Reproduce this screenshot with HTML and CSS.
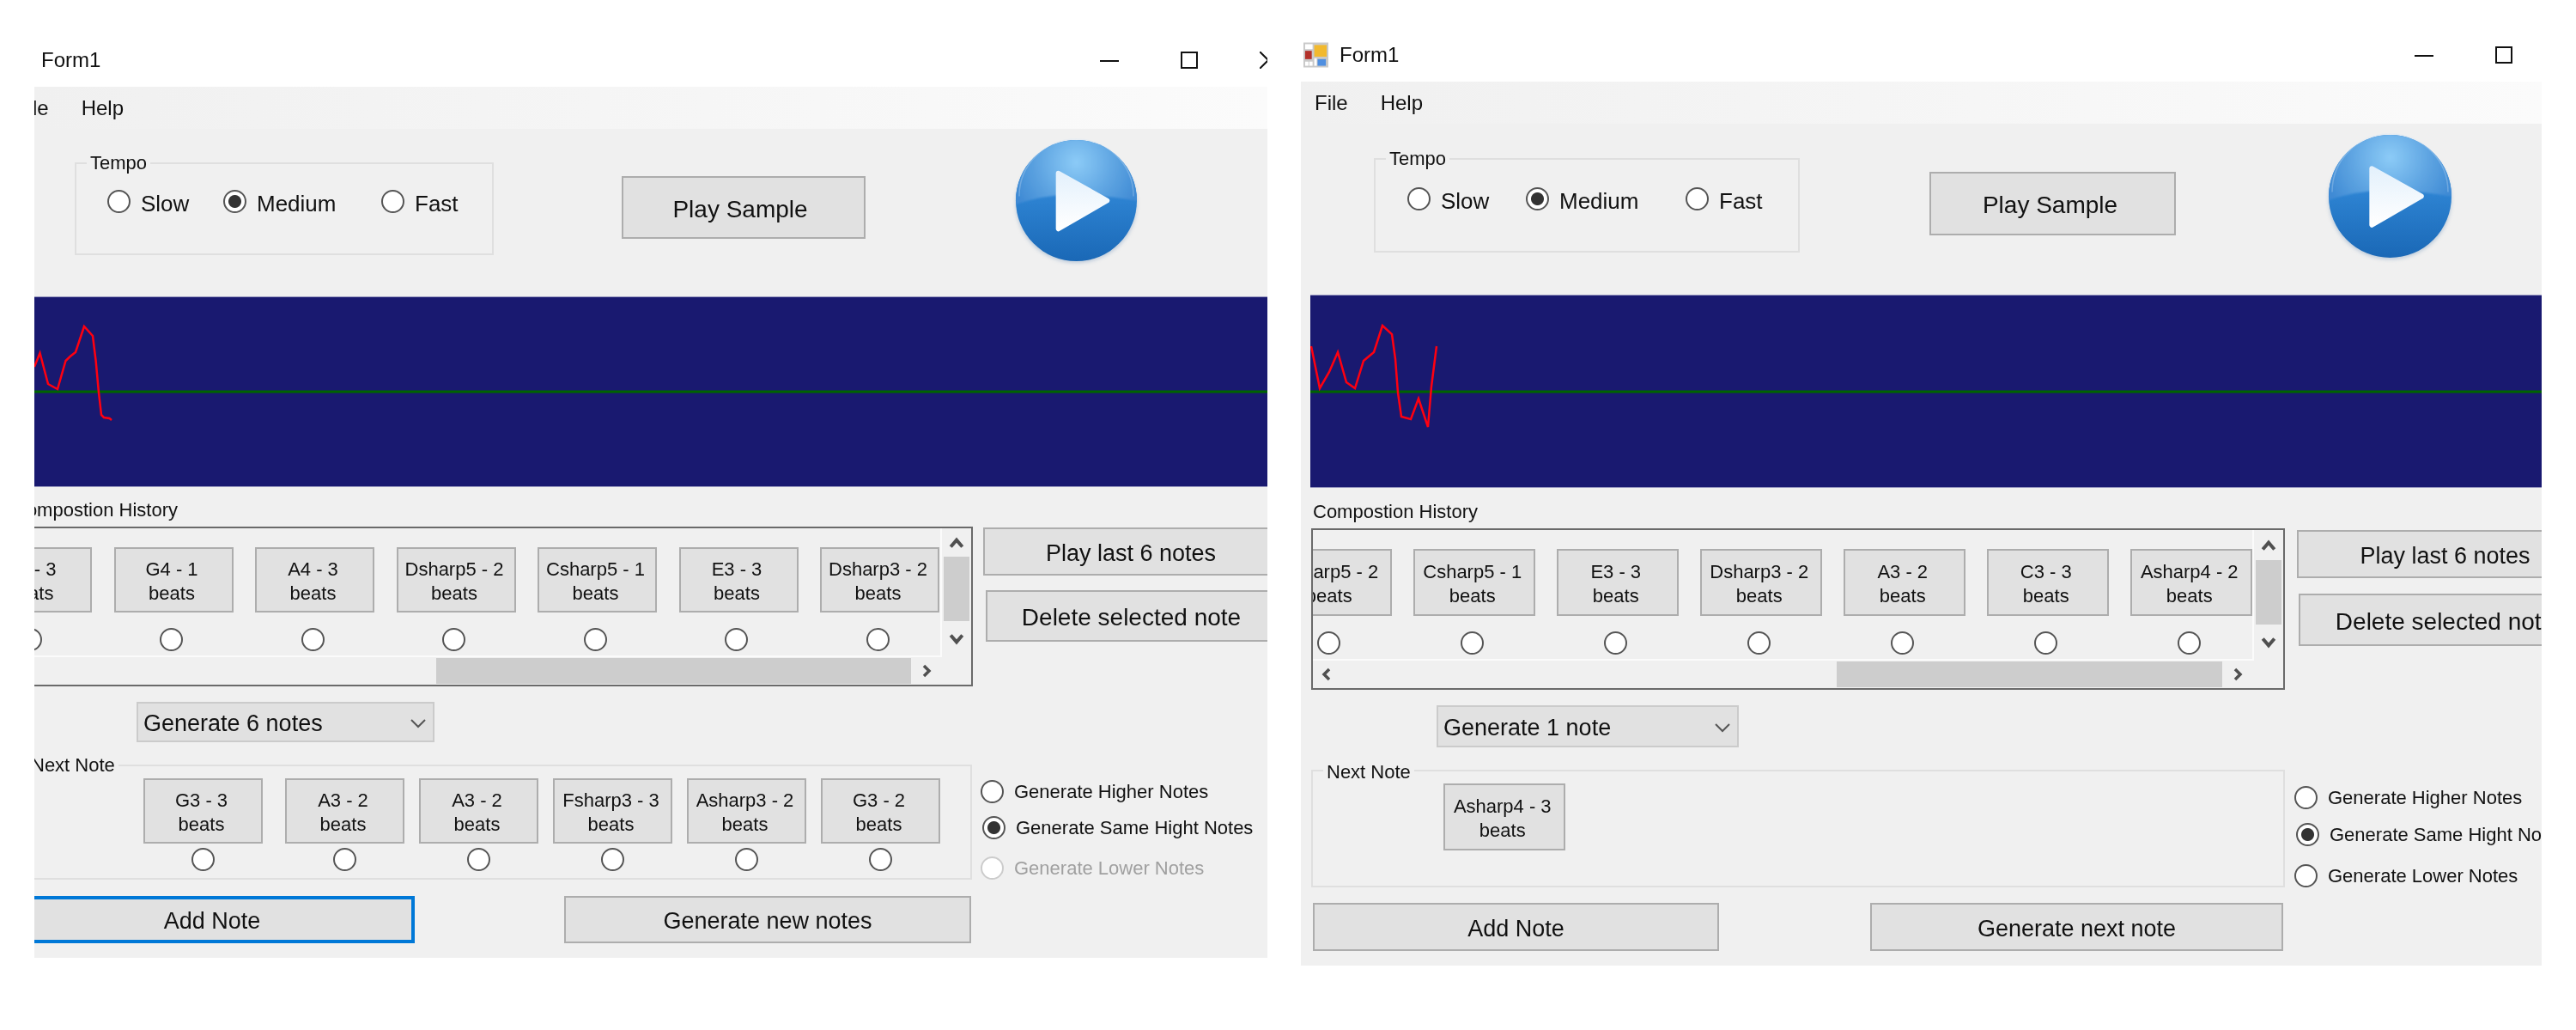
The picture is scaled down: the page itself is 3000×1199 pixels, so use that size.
FILE: index.html
```html
<!DOCTYPE html>
<html>
    <head>
        <title>Form1</title>
        <link rel="stylesheet" href="styles.css">
    </head>
    <body>
        <div class="desktop">

            <!-- first window, its left edge is cut off -->
            <div class="window win-a">
                <div class="titlebar">
                    <span class="title-text">Form1</span>
                    <div class="controls">
                        <svg class="ctl-min" viewBox="0 0 22 20"><path d="M0 11H22"/></svg>
                        <svg class="ctl-max" viewBox="0 0 20 20"><rect x="1" y="1" width="18" height="18"/></svg>
                        <svg class="ctl-close" viewBox="0 0 20 20"><path d="M0 0L20 20M20 0L0 20"/></svg>
                    </div>
                </div>
                <div class="form">
                    <div class="menubar">
                        <span class="menu-file">File</span>
                        <span class="menu-help">Help</span>
                    </div>
                    <div class="top-row">
                        <div class="group tempo">
                            <div class="group-title">Tempo</div>
                            <div class="tempo-options">
                                <label class="option"><input type="radio" name="tempoA">Slow</label>
                                <label class="option"><input type="radio" name="tempoA" checked>Medium</label>
                                <label class="option"><input type="radio" name="tempoA">Fast</label>
                            </div>
                        </div>
                        <button class="btn btn-sample">Play Sample</button>
                        <svg class="play-icon" viewBox="0 0 144 144">
                            <defs>
                                <filter id="ballShadow"><feGaussianBlur stdDeviation="2"/></filter>
                                <filter id="glossEdge"><feGaussianBlur stdDeviation="1"/></filter>
                                <radialGradient id="ballTop" gradientUnits="userSpaceOnUse" cx="72" cy="26" r="80">
                                    <stop offset="0" stop-color="#8ccbf7"/>
                                    <stop offset="0.55" stop-color="#5fa5e2"/>
                                    <stop offset="1" stop-color="#3f8ad4"/>
                                </radialGradient>
                                <linearGradient id="ballLow" x1="0" y1="0" x2="0" y2="1">
                                    <stop offset="0.45" stop-color="#2e84d3"/>
                                    <stop offset="1" stop-color="#1a68b6"/>
                                </linearGradient>
                                <linearGradient id="arrowFill" x1="0" y1="0" x2="0" y2="1">
                                    <stop offset="0" stop-color="#e4f1fc"/>
                                    <stop offset="1" stop-color="#ffffff"/>
                                </linearGradient>
                                <clipPath id="ballClip"><circle cx="72" cy="71" r="71"/></clipPath>
                            </defs>
                            <g id="playShape">
                                <ellipse cx="72" cy="75" rx="71" ry="69" fill="#8aa6c4" opacity="0.5" filter="url(#ballShadow)"/>
                                <circle cx="72" cy="71" r="71" fill="url(#ballLow)"/>
                                <g clip-path="url(#ballClip)">
                                    <path d="M-4 77Q36 63 72 64T148 72V-4H-4Z" fill="url(#ballTop)" filter="url(#glossEdge)"/>
                                </g>
                                <path d="M5 66A67 67 0 0 1 139 66" fill="none" stroke="#cfe6fa" stroke-opacity="0.3" stroke-width="1.5"/>
                                <path d="M51 39L108 71L51 104Z" fill="url(#arrowFill)" stroke="url(#arrowFill)" stroke-width="6" stroke-linejoin="round"/>
                            </g>
                        </svg>
                    </div>
                    <svg class="band" viewBox="0 1 1436 220">
                        <path class="axis" d="M0 111H1436"/>
                        <polyline class="wave" points="0,82 6.5,66 16,102 27,108 36.5,75 41.6,70 48,65 58,35 68,46 71.6,75 75,112 78,138 81,141 87.5,142 90,144"/>
                    </svg>
                    <div class="history-title">Compostion History</div>
                    <div class="history-row">
                        <div class="scrollbox">
                            <div class="viewport">
                                <div class="note"><button class="btn note-btn">C3 - 3<br>beats</button><input type="radio" name="histA"></div>
                                <div class="note"><button class="btn note-btn">G4 - 1<br>beats</button><input type="radio" name="histA"></div>
                                <div class="note"><button class="btn note-btn">A4 - 3<br>beats</button><input type="radio" name="histA"></div>
                                <div class="note"><button class="btn note-btn">Dsharp5 - 2<br>beats</button><input type="radio" name="histA"></div>
                                <div class="note"><button class="btn note-btn">Csharp5 - 1<br>beats</button><input type="radio" name="histA"></div>
                                <div class="note"><button class="btn note-btn">E3 - 3<br>beats</button><input type="radio" name="histA"></div>
                                <div class="note"><button class="btn note-btn">Dsharp3 - 2<br>beats</button><input type="radio" name="histA"></div>
                            </div>
                            <div class="vbar">
                                <svg class="arrow" viewBox="0 0 16 12"><path d="M2 10L8 3L14 10"/></svg>
                                <div class="vthumb"></div>
                                <svg class="arrow" viewBox="0 0 16 12"><path d="M2 2L8 9L14 2"/></svg>
                            </div>
                            <div class="hbar">
                                <div class="hthumb"></div>
                                <svg class="arrow-side" viewBox="0 0 12 16"><path d="M3 2L9 8L3 14"/></svg>
                            </div>
                        </div>
                        <div class="side-buttons">
                            <button class="btn btn-play-last">Play last 6 notes</button>
                            <button class="btn btn-delete">Delete selected note</button>
                        </div>
                    </div>
                    <div class="combo">
                        <span>Generate 6 notes</span>
                        <svg class="combo-arrow" viewBox="0 0 20 12"><path d="M2 2L10 10L18 2"/></svg>
                    </div>
                    <div class="next-row">
                        <div class="group next-group">
                            <div class="group-title">Next Note</div>
                            <div class="next-notes">
                                <div class="note"><button class="btn note-btn">G3 - 3<br>beats</button><input type="radio" name="nextA"></div>
                                <div class="note"><button class="btn note-btn">A3 - 2<br>beats</button><input type="radio" name="nextA"></div>
                                <div class="note"><button class="btn note-btn">A3 - 2<br>beats</button><input type="radio" name="nextA"></div>
                                <div class="note"><button class="btn note-btn">Fsharp3 - 3<br>beats</button><input type="radio" name="nextA"></div>
                                <div class="note"><button class="btn note-btn">Asharp3 - 2<br>beats</button><input type="radio" name="nextA"></div>
                                <div class="note"><button class="btn note-btn">G3 - 2<br>beats</button><input type="radio" name="nextA"></div>
                            </div>
                        </div>
                        <div class="pitch">
                            <label class="option"><input type="radio" name="pitchA">Generate Higher Notes</label>
                            <label class="option"><input type="radio" name="pitchA" checked>Generate Same Hight Notes</label>
                            <label class="option disabled"><input type="radio" name="pitchA" disabled>Generate Lower Notes</label>
                        </div>
                    </div>
                    <div class="actions">
                        <button class="btn btn-add">Add Note</button>
                        <button class="btn btn-generate">Generate new notes</button>
                    </div>
                </div>
            </div>

            <!-- second window, cut off on the right -->
            <div class="window win-b">
                <div class="titlebar">
                    <svg class="app-icon" viewBox="0 0 30 30">
                        <rect width="30" height="30" fill="#c9c9c9"/>
                        <rect x="2" y="2" width="9" height="6" fill="#fff"/>
                        <rect x="2" y="10" width="8" height="10" fill="#b3312a"/>
                        <rect x="2" y="23" width="4" height="5" fill="#fff"/>
                        <rect x="7" y="23" width="4" height="5" fill="#fff"/>
                        <rect x="13" y="3" width="15" height="14" fill="#f2b92e"/>
                        <rect x="13" y="19" width="3" height="9" fill="#fff"/>
                        <rect x="17" y="20" width="10" height="8" fill="#4f8fe0"/>
                    </svg>
                    <span class="title-text">Form1</span>
                    <div class="controls">
                        <svg class="ctl-min" viewBox="0 0 22 20"><path d="M0 11H22"/></svg>
                        <svg class="ctl-max" viewBox="0 0 20 20"><rect x="1" y="1" width="18" height="18"/></svg>
                        <svg class="ctl-close" viewBox="0 0 20 20"><path d="M0 0L20 20M20 0L0 20"/></svg>
                    </div>
                </div>
                <div class="form">
                    <div class="menubar">
                        <span class="menu-file">File</span>
                        <span class="menu-help">Help</span>
                    </div>
                    <div class="top-row">
                        <div class="group tempo">
                            <div class="group-title">Tempo</div>
                            <div class="tempo-options">
                                <label class="option"><input type="radio" name="tempoB">Slow</label>
                                <label class="option"><input type="radio" name="tempoB" checked>Medium</label>
                                <label class="option"><input type="radio" name="tempoB">Fast</label>
                            </div>
                        </div>
                        <button class="btn btn-sample">Play Sample</button>
                        <svg class="play-icon" viewBox="0 0 144 144"><use href="#playShape"/></svg>
                    </div>
                    <svg class="band" viewBox="0 1 1434 223">
                        <path class="axis" d="M0 113H1434"/>
                        <polyline class="wave" points="1,60 11,109 22,90 32,67 42,102 52,109 62,77 74,67 84,36 95,46 99,75 102,114 106,142 117,145 126,121 137,154 141,107 147,60"/>
                    </svg>
                    <div class="history-title">Compostion History</div>
                    <div class="history-row">
                        <div class="scrollbox">
                            <div class="viewport">
                                <div class="note"><button class="btn note-btn">Dsharp5 - 2<br>beats</button><input type="radio" name="histB"></div>
                                <div class="note"><button class="btn note-btn">Csharp5 - 1<br>beats</button><input type="radio" name="histB"></div>
                                <div class="note"><button class="btn note-btn">E3 - 3<br>beats</button><input type="radio" name="histB"></div>
                                <div class="note"><button class="btn note-btn">Dsharp3 - 2<br>beats</button><input type="radio" name="histB"></div>
                                <div class="note"><button class="btn note-btn">A3 - 2<br>beats</button><input type="radio" name="histB"></div>
                                <div class="note"><button class="btn note-btn">C3 - 3<br>beats</button><input type="radio" name="histB"></div>
                                <div class="note"><button class="btn note-btn">Asharp4 - 2<br>beats</button><input type="radio" name="histB"></div>
                            </div>
                            <div class="vbar">
                                <svg class="arrow" viewBox="0 0 16 12"><path d="M2 10L8 3L14 10"/></svg>
                                <div class="vthumb"></div>
                                <svg class="arrow" viewBox="0 0 16 12"><path d="M2 2L8 9L14 2"/></svg>
                            </div>
                            <div class="hbar">
                                <svg class="arrow-side" viewBox="0 0 12 16"><path d="M9 2L3 8L9 14"/></svg>
                                <div class="hthumb"></div>
                                <svg class="arrow-side" viewBox="0 0 12 16"><path d="M3 2L9 8L3 14"/></svg>
                            </div>
                        </div>
                        <div class="side-buttons">
                            <button class="btn btn-play-last">Play last 6 notes</button>
                            <button class="btn btn-delete">Delete selected note</button>
                        </div>
                    </div>
                    <div class="combo">
                        <span>Generate 1 note</span>
                        <svg class="combo-arrow" viewBox="0 0 20 12"><path d="M2 2L10 10L18 2"/></svg>
                    </div>
                    <div class="next-row">
                        <div class="group next-group">
                            <div class="group-title">Next Note</div>
                            <div class="next-notes">
                                <div class="note"><button class="btn note-btn">Asharp4 - 3<br>beats</button></div>
                            </div>
                        </div>
                        <div class="pitch">
                            <label class="option"><input type="radio" name="pitchB">Generate Higher Notes</label>
                            <label class="option"><input type="radio" name="pitchB" checked>Generate Same Hight Notes</label>
                            <label class="option"><input type="radio" name="pitchB">Generate Lower Notes</label>
                        </div>
                    </div>
                    <div class="actions">
                        <button class="btn btn-add">Add Note</button>
                        <button class="btn btn-generate">Generate next note</button>
                    </div>
                </div>
            </div>

        </div>
    </body>
</html>
```

FILE: styles.css
```css
* {
    box-sizing: border-box;
}

body {
    margin: 0;
    background-color: white;
    font-family: "Liberation Sans", Arial, sans-serif;
    color: #111;
}

.desktop {
    display: flex;
    align-items: flex-start;
    padding-left: 40px;
    filter: blur(0.5px);
}

.window {
    flex: none;
    overflow: hidden;
}

.win-a {
    width: 1436px;
}

.win-b {
    width: 1445px;
    margin-left: 39px;
}

/* title bar */
.titlebar {
    display: flex;
    align-items: center;
    font-size: 24px;
}

.win-a .titlebar {
    width: 1447px;
    height: 101px;
    padding: 39px 0 0 8px;
}

.win-b .titlebar {
    width: 1503px;
    height: 95px;
    padding: 32px 0 0 3px;
}

.app-icon {
    width: 29px;
    height: 30px;
    margin-right: 13px;
}

.controls {
    display: flex;
    align-items: center;
    gap: 72px;
    margin-left: auto;
}

.controls svg {
    flex: none;
    height: 20px;
    fill: none;
    stroke: #111;
    stroke-width: 2;
}

.ctl-min {
    width: 22px;
}

.ctl-max,
.ctl-close {
    width: 20px;
}

/* form body */
.form {
    background-color: #f0f0f0;
    padding-bottom: 17px;
}

.menubar {
    display: flex;
    align-items: center;
    height: 49px;
    font-size: 24px;
    background: linear-gradient(to right, #f0f0f0, #fbfbfb);
}

.win-a .menu-file {
    margin-left: -22px;
}

.win-b .menu-file {
    margin-left: 16px;
}

.menu-help {
    margin-left: 38px;
}

.top-row {
    display: flex;
    align-items: flex-start;
}

.win-a .top-row {
    height: 195px;
}

.win-b .top-row {
    height: 199px;
}

.group {
    border: 2px solid #dfdfdf;
}

.group-title {
    width: fit-content;
    height: 26px;
    line-height: 26px;
    margin-top: -14px;
    padding: 0 4px;
    font-size: 22px;
    background-color: #f0f0f0;
}

.tempo {
    flex: none;
}

.win-a .tempo {
    width: 488px;
    height: 108px;
    margin: 39px 0 0 47px;
}

.win-b .tempo {
    width: 496px;
    height: 110px;
    margin: 40px 0 0 85px;
}

.tempo .group-title {
    margin-left: 12px;
}

.tempo-options {
    display: grid;
    font-size: 26px;
}

.tempo-options .option {
    align-items: flex-start;
    line-height: 33px;
}

.win-a .tempo-options {
    grid-template-columns: 135px 184px auto;
    margin-top: 17.5px;
    padding-left: 36px;
}

.win-b .tempo-options {
    grid-template-columns: 138px 186px auto;
    margin-top: 19.5px;
    padding-left: 37px;
}

.option {
    display: flex;
    align-items: center;
    gap: 12px;
}

input[type="radio"] {
    appearance: none;
    flex: none;
    width: 27px;
    height: 27px;
    margin: 0;
    border: 2px solid #555;
    border-radius: 50%;
    background-color: white;
}

input[type="radio"]:checked {
    background: radial-gradient(circle, #333 7px, white 8px);
}

input[type="radio"]:disabled {
    border-color: #ccc;
}

.disabled {
    color: #a0a0a0;
}

.btn {
    flex: none;
    padding: 4px 0 0 0;
    background-color: #e1e1e1;
    border: 2px solid #adadad;
    font-family: inherit;
    color: #111;
}

.btn-sample {
    font-size: 28px;
}

.win-a .btn-sample {
    width: 284px;
    height: 73px;
    margin: 55px 0 0 149px;
    padding-right: 8px;
}

.win-b .btn-sample {
    width: 287px;
    height: 74px;
    margin: 56px 0 0 151px;
    padding-right: 6px;
}

.play-icon {
    flex: none;
    overflow: visible;
    margin-top: 13px;
}

.win-a .play-icon {
    width: 143px;
    height: 143px;
    margin-left: 174px;
}

.win-b .play-icon {
    width: 145px;
    height: 145px;
    margin-left: 177px;
}

/* wave display */
.band {
    display: block;
    background-color: #191970;
    border-top: 1px solid #9a9ac0;
    border-bottom: 1px solid #9a9ac0;
}

.win-a .band {
    width: 1436px;
    height: 222px;
}

.win-b .band {
    width: 1434px;
    height: 225px;
    margin-left: 11px;
}

.axis {
    stroke: #006400;
    stroke-width: 3;
}

.wave {
    fill: none;
    stroke: #ff0010;
    stroke-width: 2.5;
}

/* composition history */
.history-title {
    height: 26px;
    line-height: 26px;
    font-size: 22px;
}

.win-a .history-title {
    margin: 14px 0 6px -25px;
}

.win-b .history-title {
    margin: 15px 0 6px 14px;
}

.history-row {
    display: flex;
    align-items: flex-start;
}

.win-a .history-row {
    margin-left: -10px;
}

.win-b .history-row {
    margin-left: 12px;
}

.scrollbox {
    flex: none;
    display: grid;
    grid-template-columns: 1fr 34px;
    grid-template-rows: 1fr 32px;
    border: 2px solid #6a6a6a;
}

.win-a .scrollbox {
    width: 1103px;
    height: 186px;
}

.win-b .scrollbox {
    width: 1134px;
    height: 188px;
}

.viewport {
    display: flex;
    align-items: flex-start;
    gap: 25.5px;
    padding-top: 22px;
    overflow: hidden;
    border-right: 2px solid #fbfbfb;
    border-bottom: 2px solid #fbfbfb;
}

.note {
    flex: none;
    display: flex;
    flex-direction: column;
    align-items: center;
    width: 139px;
}

.note-btn {
    width: 100%;
    height: 76px;
    padding-right: 4px;
    font-size: 22px;
    line-height: 28px;
}

.note input {
    margin: 18px 5px 0 0;
}

.win-a .viewport .note:first-child {
    margin-left: -64px;
}

.win-b .viewport .note:first-child {
    margin-left: -50px;
}

.win-b .note {
    width: 141.5px;
}

.win-b .note-btn {
    height: 78px;
}

.vbar {
    display: grid;
    justify-items: center;
    align-items: center;
}

.win-a .vbar {
    grid-template-rows: 33px 75px 1fr;
}

.win-b .vbar {
    grid-template-rows: 35px 75px 1fr;
}

.vthumb {
    width: 30px;
    height: 100%;
    background-color: #cdcdcd;
}

.arrow {
    width: 18px;
    height: 14px;
}

.arrow-side {
    flex: none;
    width: 12px;
    height: 18px;
}

.arrow path,
.arrow-side path {
    fill: none;
    stroke: #505050;
    stroke-width: 3.5;
}

.hbar {
    display: flex;
    align-items: center;
}

.hthumb {
    flex: none;
    height: 30px;
    background-color: #cdcdcd;
}

.hbar .arrow-side:last-child {
    margin-left: 12px;
}

.win-a .hthumb {
    width: 553px;
    margin-left: 476px;
}

.win-b .hbar .arrow-side:first-child {
    margin: 0 12px 0 10px;
}

.win-b .hthumb {
    width: 449px;
    margin-left: 576px;
}

.side-buttons {
    flex: none;
    display: flex;
    flex-direction: column;
    align-items: flex-start;
}

.btn-play-last {
    height: 56px;
    margin-top: 1px;
    font-size: 27px;
}

.btn-delete {
    height: 60px;
    margin: 17px 0 0 3px;
    font-size: 28px;
}

.win-a .side-buttons {
    margin-left: 12px;
}

.win-a .btn-play-last {
    width: 344px;
}

.win-a .btn-delete {
    width: 339px;
}

.win-b .side-buttons {
    margin-left: 14px;
}

.win-b .btn-play-last {
    width: 345px;
    margin-top: 2px;
}

.win-b .btn-delete {
    width: 341px;
    height: 61px;
    margin-top: 18px;
    margin-left: 2px;
}

/* generate combo */
.combo {
    display: flex;
    align-items: center;
    justify-content: space-between;
    padding: 3px 7px 0 6px;
    background-color: #e1e1e1;
    border: 2px solid #cbcbcb;
    font-size: 27px;
}

.win-a .combo {
    width: 347px;
    height: 47px;
    margin: 18px 0 0 119px;
}

.win-b .combo {
    width: 352px;
    height: 49px;
    margin: 18px 0 0 158px;
}

.combo-arrow {
    width: 20px;
    height: 12px;
    fill: none;
    stroke: #555;
    stroke-width: 2;
}

/* next note */
.next-row {
    display: flex;
    align-items: flex-start;
    margin-top: 26px;
}

.next-group {
    flex: none;
}

.next-notes {
    display: flex;
    align-items: flex-start;
    gap: 17px;
    margin-top: 2px;
}

.next-notes .note input {
    margin: 5px 0 0 0;
}

.win-a .next-row {
    margin-left: -10px;
}

.win-a .next-group {
    width: 1102px;
    height: 134px;
}

.win-a .next-notes {
    padding-left: 135px;
}

.win-a .next-notes .note:first-child {
    margin-right: 9px;
}

.win-b .next-row {
    margin-left: 12px;
}

.win-b .next-group {
    width: 1134px;
    height: 137px;
}

.win-b .next-group .group-title {
    margin: -12px 0 0 12px;
}

.win-b .next-notes {
    margin-top: 0;
    padding-left: 152px;
}

.pitch {
    flex: none;
    display: flex;
    flex-direction: column;
    font-size: 22px;
}

.win-a .pitch {
    margin: 18px 0 0 10px;
}

.win-b .pitch {
    margin: 19px 0 0 11px;
}

.pitch .option:nth-child(2) {
    margin: 15px 0 0 2px;
}

.pitch .option:nth-child(3) {
    margin-top: 20px;
}

.win-b .pitch .option:nth-child(2) {
    margin-top: 16px;
}

.win-b .pitch .option:nth-child(3) {
    margin-top: 21px;
}

/* bottom buttons */
.actions {
    display: flex;
    align-items: flex-start;
}

.btn-add,
.btn-generate {
    font-size: 27px;
}

.win-a .actions {
    margin: 19px 0 0 -29px;
}

.win-a .btn-add {
    width: 472px;
    height: 55px;
    border: 4px solid #0078d7;
}

.win-a .btn-generate {
    width: 474px;
    height: 55px;
    margin-left: 174px;
}

.win-b .actions {
    margin: 18px 0 0 14px;
}

.win-b .btn-add {
    width: 473px;
    height: 56px;
}

.win-b .btn-generate {
    width: 481px;
    height: 56px;
    margin-left: 176px;
}
```
